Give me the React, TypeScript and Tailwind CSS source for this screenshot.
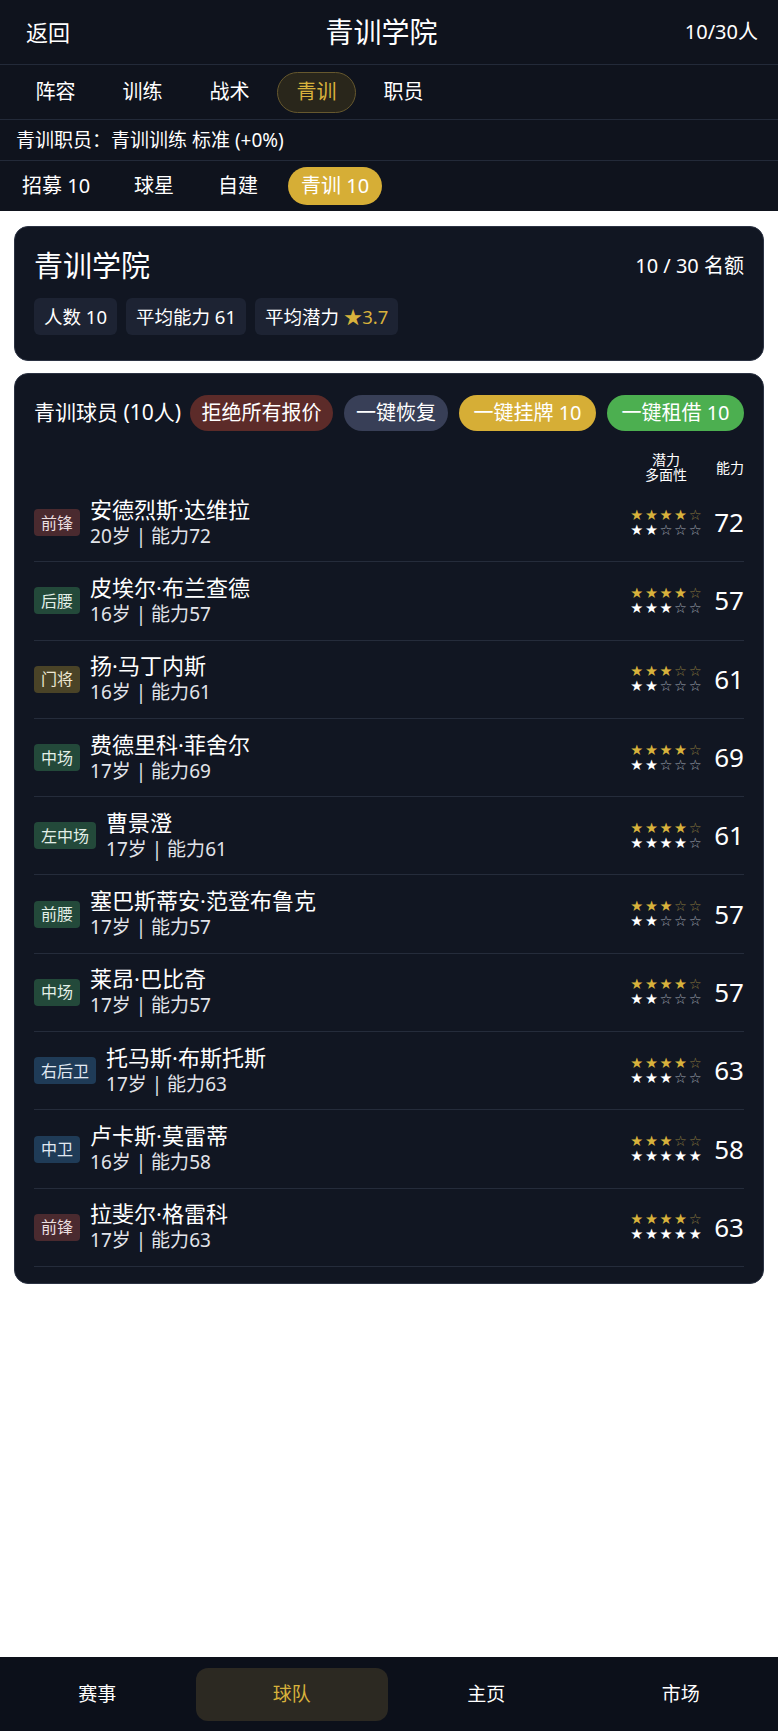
import React from "react";

type Player = {
  pos: string;
  kind: "fw" | "mid" | "gk" | "def";
  name: string;
  age: number;
  ab: number;
  pot: number;
  vers: number;
};

const players: Player[] = [
  { pos: "前锋", kind: "fw", name: "安德烈斯·达维拉", age: 20, ab: 72, pot: 4, vers: 2 },
  { pos: "后腰", kind: "mid", name: "皮埃尔·布兰查德", age: 16, ab: 57, pot: 4, vers: 3 },
  { pos: "门将", kind: "gk", name: "扬·马丁内斯", age: 16, ab: 61, pot: 3, vers: 2 },
  { pos: "中场", kind: "mid", name: "费德里科·菲舍尔", age: 17, ab: 69, pot: 4, vers: 2 },
  { pos: "左中场", kind: "mid", name: "曹景澄", age: 17, ab: 61, pot: 4, vers: 4 },
  { pos: "前腰", kind: "mid", name: "塞巴斯蒂安·范登布鲁克", age: 17, ab: 57, pot: 3, vers: 2 },
  { pos: "中场", kind: "mid", name: "莱昂·巴比奇", age: 17, ab: 57, pot: 4, vers: 2 },
  { pos: "右后卫", kind: "def", name: "托马斯·布斯托斯", age: 17, ab: 63, pot: 4, vers: 3 },
  { pos: "中卫", kind: "def", name: "卢卡斯·莫雷蒂", age: 16, ab: 58, pot: 3, vers: 5 },
  { pos: "前锋", kind: "fw", name: "拉斐尔·格雷科", age: 17, ab: 63, pot: 4, vers: 5 },
];

const tagClass: Record<Player["kind"], string> = {
  fw: "bg-[#4a2a2f] text-[#eadfe0]",
  mid: "bg-[#23493a] text-[#e3efe8]",
  gk: "bg-[#4a4327] text-[#eee8d4]",
  def: "bg-[#1f3b57] text-[#e1e9f2]",
};

function Stars({ n, gold }: { n: number; gold: boolean }) {
  const arr = [0, 1, 2, 3, 4];
  return (
    <div
      className="flex justify-center text-[14.5px] leading-[15px] h-[15px]"
      style={{ fontFamily: '"DejaVu Sans", sans-serif' }}
    >
      {arr.map((i) =>
        i < n ? (
          <span key={i} className={`w-[14.6px] text-center ${gold ? "text-[#d8b23c]" : "text-white"}`}>
            ★
          </span>
        ) : (
          <span key={i} className={`w-[14.6px] text-center ${gold ? "text-[#8c7a3e]" : "text-[#a2a8b4]"}`}>
            ☆
          </span>
        )
      )}
    </div>
  );
}

export default function App() {
  const tabs = ["阵容", "训练", "战术", "青训", "职员"];
  return (
    <div
      className="w-[778px] min-h-[1731px] bg-white flex flex-col text-white"
      style={{ fontFamily: '"Noto Sans", "Noto Sans CJK SC", sans-serif' }}
    >
      {/* Header */}
      <div className="h-[65px] bg-[#0f131d] border-b border-[#232a39] flex items-center justify-between pl-[26px] pr-[20px]">
        <span className="text-[22px]">返回</span>
        <span className="text-[28px] ml-[8px]">青训学院</span>
        <span className="text-[20px]">10/30人</span>
      </div>

      {/* Tabs */}
      <div className="h-[55px] bg-[#0f131d] border-b border-[#232a39] flex items-center gap-[8px] pl-[16px]">
        {tabs.map((t) =>
          t === "青训" ? (
            <div
              key={t}
              className="h-[41px] w-[79px] flex items-center justify-center rounded-full border border-[#66582e] bg-[#29261b] text-[#d8b23c] text-[20px]"
            >
              {t}
            </div>
          ) : (
            <div key={t} className="h-[41px] w-[79px] flex items-center justify-center text-[20px]">
              {t}
            </div>
          )
        )}
      </div>

      {/* Info */}
      <div className="h-[41px] bg-[#0f131d] border-b border-[#232a39] flex items-center pl-[16px] text-[19px]">
        青训职员：青训训练 标准 (+0%)
      </div>

      {/* Sub tabs */}
      <div className="h-[50px] bg-[#0f131d] flex items-center gap-[16px] pl-[8px] text-[20px]">
        <div className="px-[14px]">招募 10</div>
        <div className="px-[14px]">球星</div>
        <div className="px-[14px]">自建</div>
        <div className="h-[38px] px-[13px] rounded-full bg-[#d6ae36] flex items-center">青训 10</div>
      </div>

      {/* Main */}
      <div className="flex-1 bg-white px-[14px] pt-[15px] flex flex-col gap-[12px]">
        {/* Card 1 */}
        <div className="rounded-[14px] bg-[#111622] border border-[#2b3242] px-[19px] pt-[21px] pb-[25px]">
          <div className="flex items-center justify-between h-[36px]">
            <span className="text-[29px]">青训学院</span>
            <span className="text-[20px]">10 / 30 名额</span>
          </div>
          <div className="flex gap-[9px] mt-[14px] text-[18.5px]">
            <div className="h-[37px] px-[10px] rounded-[6px] bg-[#1d2333] flex items-center">人数 10</div>
            <div className="h-[37px] px-[10px] rounded-[6px] bg-[#1d2333] flex items-center">平均能力 61</div>
            <div className="h-[37px] px-[10px] rounded-[6px] bg-[#1d2333] flex items-center">
              平均潜力&nbsp;<span className="text-[#d8b23c]">★3.7</span>
            </div>
          </div>
        </div>

        {/* Card 2 */}
        <div className="rounded-[14px] bg-[#111622] border border-[#2b3242] px-[19px] pt-[21px] pb-[16px]">
          <div className="flex items-center justify-between h-[36px]">
            <span className="text-[21px]">青训球员 (10人)</span>
            <div className="flex gap-[11px] text-[20px]">
              <div className="h-[36px] w-[143px] rounded-full bg-[#5c2b29] flex items-center justify-center">拒绝所有报价</div>
              <div className="h-[36px] w-[104px] rounded-full bg-[#383f57] flex items-center justify-center">一键恢复</div>
              <div className="h-[36px] w-[137px] rounded-full bg-[#d6ae36] flex items-center justify-center">一键挂牌 10</div>
              <div className="h-[36px] w-[137px] rounded-full bg-[#4caf50] flex items-center justify-center">一键租借 10</div>
            </div>
          </div>

          <div className="flex justify-end items-center mt-[21px] h-[30px] text-[14px]">
            <div className="w-[76px] flex flex-col items-center leading-[15px]">
              <span>潜力</span>
              <span>多面性</span>
            </div>
            <div className="w-[40px] text-right">能力</div>
          </div>

          <div className="mt-[2px]">
            {players.map((p, i) => (
              <div key={i} className="h-[78.3px] border-b border-[#252c3b] flex items-center">
                <div
                  className={`h-[27px] px-[7px] rounded-[4px] flex items-center text-[16px] ${tagClass[p.kind]}`}
                >
                  {p.pos}
                </div>
                <div className="ml-[10px] flex-1 flex flex-col">
                  <span className="text-[22px] leading-[27px]">{p.name}</span>
                  <span className="text-[19px] leading-[27px] text-[#e2e4ea]">
                    {p.age}岁 | 能力{p.ab}
                  </span>
                </div>
                <div className="w-[76px] flex flex-col">
                  <Stars n={p.pot} gold />
                  <Stars n={p.vers} gold={false} />
                </div>
                <div className="w-[40px] text-right text-[26px]">{p.ab}</div>
              </div>
            ))}
          </div>
        </div>
      </div>

      {/* Bottom nav */}
      <div className="h-[74px] bg-[#0c101a] grid grid-cols-4 items-center text-[19px]">
        <div className="flex justify-center">赛事</div>
        <div className="h-[53px] mx-[1px] rounded-[12px] bg-[#2c2922] text-[#d8b23c] flex items-center justify-center">球队</div>
        <div className="flex justify-center">主页</div>
        <div className="flex justify-center">市场</div>
      </div>
    </div>
  );
}
